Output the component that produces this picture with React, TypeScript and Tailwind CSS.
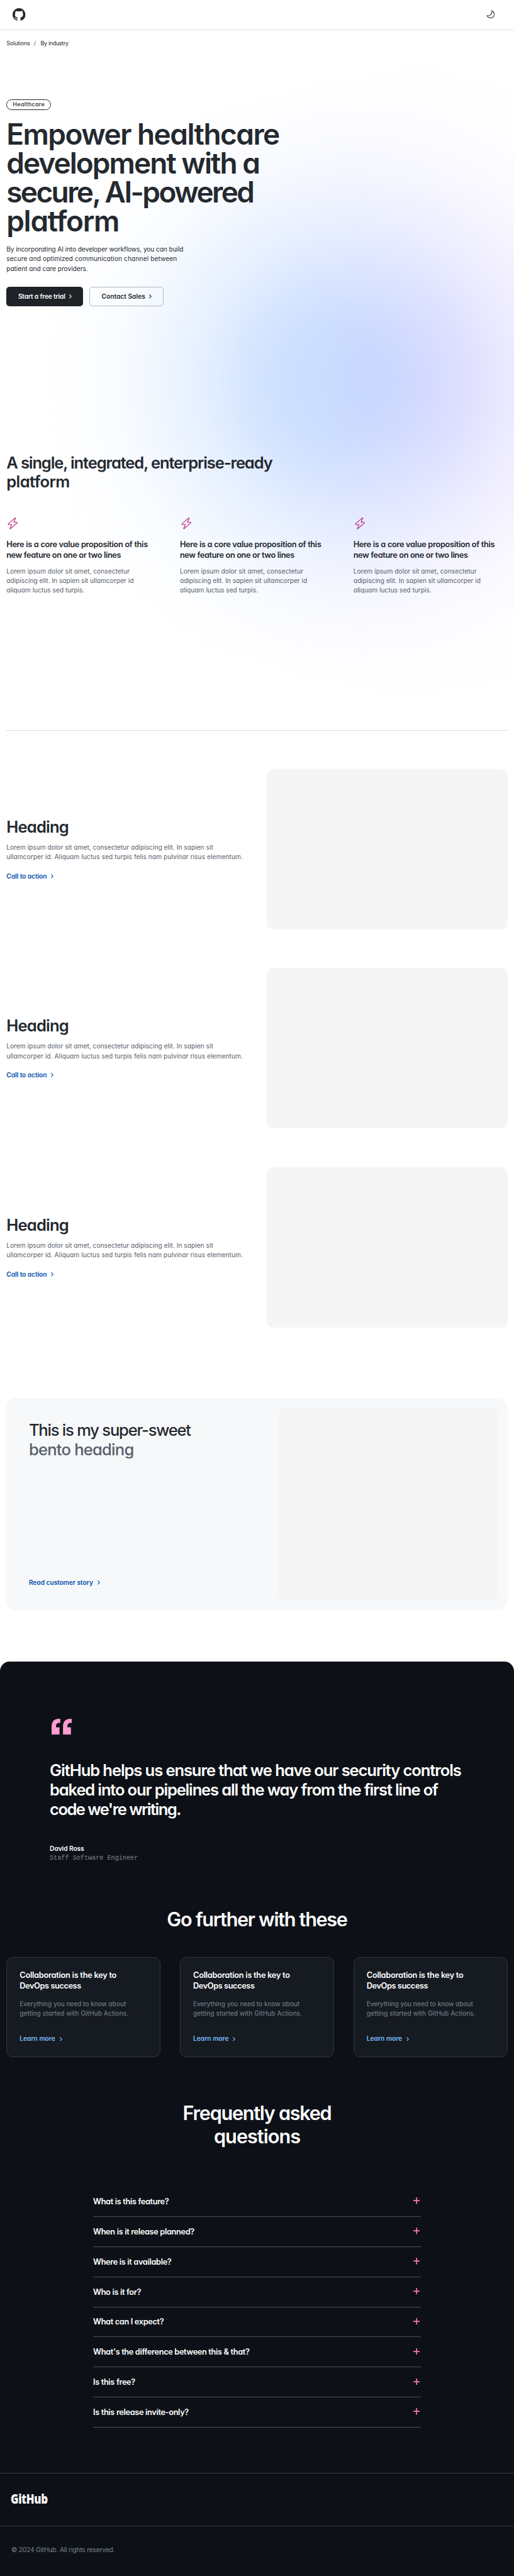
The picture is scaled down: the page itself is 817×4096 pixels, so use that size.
import type { ReactNode } from "react";
import clsx from "clsx";
import { GoMoon, GoZap } from "react-icons/go";

/** One line of text with its own tracking. */
function Line({ className, children }: { className?: string; children: ReactNode }) {
  return <span className={clsx("block whitespace-nowrap", className)}>{children}</span>;
}

function Chevron({ className }: { className?: string }) {
  return (
    <svg
      viewBox="0 0 6 10"
      className={clsx("h-[6.6px] w-[4px] shrink-0", className)}
      fill="none"
      stroke="currentColor"
      strokeWidth="1.7"
      strokeLinecap="round"
      strokeLinejoin="round"
    >
      <path d="M1 1l4 4-4 4" />
    </svg>
  );
}

function GitHubMark() {
  return (
    <svg viewBox="0 0 16 16" className="size-[20.4px]" fill="currentColor" aria-label="GitHub">
      <path d="M8 0c4.42 0 8 3.58 8 8a8.013 8.013 0 0 1-5.45 7.59c-.4.08-.55-.17-.55-.38 0-.27.01-1.13.01-2.2 0-.75-.25-1.23-.54-1.48 1.78-.2 3.65-.88 3.65-3.95 0-.88-.31-1.59-.82-2.15.08-.2.36-1.02-.08-2.12 0 0-.67-.22-2.2.82-.64-.18-1.32-.27-2-.27-.68 0-1.36.09-2 .27-1.53-1.03-2.2-.82-2.2-.82-.44 1.1-.16 1.92-.08 2.12-.51.56-.82 1.28-.82 2.15 0 3.06 1.86 3.75 3.64 3.95-.23.2-.44.55-.51 1.07-.46.21-1.61.55-2.33-.66-.15-.24-.6-.83-1.23-.82-.67.01-.27.38.01.53.34.19.73.9.82 1.13.16.45.68 1.31 2.69.94 0 .67.01 1.3.01 1.49 0 .21-.15.45-.55.38A7.995 7.995 0 0 1 0 8c0-4.42 3.58-8 8-8Z" />
    </svg>
  );
}

function QuoteMark() {
  const mark = "M0 39.3V18C0 7 7 0 18 0h3.7v10.3h-2C14 10.3 11 13.5 11 18v3h8.7v18.3z";
  return (
    <svg viewBox="0 0 50.2 39.3" className="ml-[3.4px] h-[25.1px] w-[32px]" fill="#ff9bce">
      <path d={mark} />
      <path d={mark} transform="translate(28.5 0)" />
    </svg>
  );
}

function TextLink({ children, className }: { children: ReactNode; className?: string }) {
  return (
    <a
      className={clsx(
        "flex items-center text-[10.2px] leading-[15.3px] font-[570] whitespace-nowrap",
        className,
      )}
    >
      {children}
      <Chevron className="ml-[6.8px]" />
    </a>
  );
}

function Header() {
  return (
    <header className="flex h-12 items-center justify-between border-b border-[#e1e4e6] pr-[29.4px] pb-px pl-[20.4px]">
      <GitHubMark />
      <GoMoon className="size-[15.3px]" />
    </header>
  );
}

function Hero() {
  return (
    <section className="flex h-[672.6px] flex-col items-start px-[10.2px]">
      <nav className="flex pt-[12.9px] text-[8.93px] leading-[15px]">
        <span className="w-[43.6px] tracking-[-0.018em]">Solutions</span>
        <span className="w-[10.7px] text-[#57606a]">/</span>
        <span className="tracking-[-0.034em]">By industry</span>
      </nav>
      <div className="mt-[82px] flex h-[17.5px] w-[71px] items-center justify-center rounded-full border border-[#24292f] text-[8.93px] leading-none font-medium tracking-[0.037em]">
        Healthcare
      </div>
      <h1 className="mt-[15.3px] text-[45.95px] leading-[45.93px] font-[580]">
        <Line className="tracking-[-0.033em]">Empower healthcare</Line>
        <Line className="tracking-[-0.042em]">development with a</Line>
        <Line className="tracking-[-0.056em]">secure, AI-powered</Line>
        <Line className="tracking-[-0.027em]">platform</Line>
      </h1>
      <p className="mt-[14.5px] text-[10.2px] leading-[15.31px]">
        <Line className="tracking-[-0.0104em]">By incorporating AI into developer workflows, you can build</Line>
        <Line className="tracking-[0.0077em]">secure and optimized communication channel between</Line>
        <Line className="tracking-[-0.0043em]">patient and care providers.</Line>
      </p>
      <div className="mt-[21.2px] flex gap-[10.2px] text-[10.2px] leading-none font-[570]">
        <a className="flex h-[30.6px] w-[122px] items-center rounded-[5px] bg-[#1f2328] pl-[18.7px] tracking-[-0.015em] text-white">
          Start a free trial
          <Chevron className="ml-[6.2px]" />
        </a>
        <a className="flex h-[30.6px] w-[117.4px] items-center rounded-[5px] border-[1.5px] border-[#afb8c1] pl-[18px] tracking-[0.002em]">
          Contact Sales
          <Chevron className="ml-[6.2px]" />
        </a>
      </div>
    </section>
  );
}

function Pillar() {
  return (
    <div>
      <GoZap className="size-[20.4px] text-[#bf3989]" />
      <h3 className="mt-[15.3px] text-[12.76px] leading-[16.6px] font-[570]">
        <Line className="tracking-[-0.024em]">Here is a core value proposition of this</Line>
        <Line className="tracking-[-0.029em]">new feature on one or two lines</Line>
      </h3>
      <p className="mt-[9.5px] text-[10.2px] leading-[15.31px] text-[#57606a]">
        <Line className="tracking-[0.0035em]">Lorem ipsum dolor sit amet, consectetur</Line>
        <Line className="tracking-[-0.0014em]">adipiscing elit. In sapien sit ullamcorper id</Line>
        <Line>aliquam luctus sed turpis.</Line>
      </p>
    </div>
  );
}

function Pillars() {
  return (
    <section className="mx-[10.2px] h-[441.3px] border-b border-[#dadadd]">
      <h2 className="text-[25.53px] leading-[30.62px] font-[580]">
        <Line className="tracking-[-0.044em]">A single, integrated, enterprise-ready</Line>
        <Line className="tracking-[-0.022em]">platform</Line>
      </h2>
      <div className="mt-[40.5px] grid grid-cols-3 gap-[30.6px]">
        <Pillar />
        <Pillar />
        <Pillar />
      </div>
    </section>
  );
}

function River() {
  return (
    <div className="grid h-[255.2px] grid-cols-[1fr_383px] items-center">
      <div>
        <h3 className="text-[25.53px] leading-[30.62px] font-[570] tracking-[-0.030em]">Heading</h3>
        <p className="mt-[9.3px] text-[10.2px] leading-[15.31px] text-[#57606a]">
          <Line className="tracking-[0.0011em]">
            Lorem ipsum dolor sit amet, consectetur adipiscing elit. In sapien sit
          </Line>
          <Line className="tracking-[0.0056em]">
            ullamcorper id. Aliquam luctus sed turpis felis nam pulvinar risus elementum.
          </Line>
        </p>
        <TextLink className="mt-[15.3px] tracking-[-0.006em] text-[#0550ae]">Call to action</TextLink>
      </div>
      <div className="h-full rounded-[10.2px] bg-[#f5f5f5]" />
    </div>
  );
}

function Bento() {
  return (
    <section className="mx-[10.2px] mt-[112.3px] flex h-[336.9px] justify-between rounded-[15.3px] bg-[#f6f8fa] p-[15.3px]">
      <div className="flex flex-col justify-between pt-[20.9px] pb-[20.4px] pl-[20.4px]">
        <h2 className="text-[25.53px] leading-[30.62px] font-[450]">
          <Line className="tracking-[-0.047em]">This is my super-sweet</Line>
          <Line className="tracking-[-0.029em] text-[#57606a]">bento heading</Line>
        </h2>
        <TextLink className="tracking-[-0.003em] text-[#0550ae]">Read customer story</TextLink>
      </div>
      <div className="w-[349.8px] rounded-[10.2px] bg-[#f5f5f5]" />
    </section>
  );
}

function Testimonial() {
  return (
    <figure className="px-[79.1px] pt-[91.8px]">
      <QuoteMark />
      <blockquote className="mt-[41.9px] text-[25.53px] leading-[30.62px] font-[570]">
        <Line className="tracking-[-0.0425em]">GitHub helps us ensure that we have our security controls</Line>
        <Line className="tracking-[-0.0455em]">baked into our pipelines all the way from the first line of</Line>
        <Line className="tracking-[-0.060em]">code we're writing.</Line>
      </blockquote>
      <figcaption className="mt-[39.5px] text-[10.2px] leading-[15.31px]">
        <Line className="font-[570] tracking-[-0.007em]">David Ross</Line>
        <Line className="font-['Liberation_Mono',monospace] tracking-[-0.002em] text-[#7d8590]">
          Staff Software Engineer
        </Line>
      </figcaption>
    </figure>
  );
}

function Card() {
  return (
    <article className="h-[158.9px] rounded-[10.2px] border border-[#30363d] bg-[#161b22] px-[20.1px] pt-[19.9px]">
      <h3 className="text-[12.76px] leading-[16.6px] font-[570]">
        <Line className="tracking-[-0.020em]">Collaboration is the key to</Line>
        <Line className="tracking-[-0.032em]">DevOps success</Line>
      </h3>
      <p className="mt-[12.8px] text-[10.2px] leading-[15.31px] text-[#7d8590]">
        <Line className="tracking-[-0.0054em]">Everything you need to know about</Line>
        <Line className="tracking-[0.0038em]">getting started with GitHub Actions.</Line>
      </p>
      <TextLink className="mt-[24.5px] tracking-[0.001em] text-[#79c0ff]">Learn more</TextLink>
    </article>
  );
}

const questions = [
  "What is this feature?",
  "When is it release planned?",
  "Where is it available?",
  "Who is it for?",
  "What can I expect?",
  "What's the difference between this & that?",
  "Is this free?",
  "Is this release invite-only?",
];

function Faq() {
  return (
    <section className="mt-[71px] flex flex-col items-center">
      <h2 className="text-center text-[30.63px] leading-[36.74px] font-[570]">
        <Line className="tracking-[-0.042em]">Frequently asked</Line>
        <Line className="tracking-[-0.032em]">questions</Line>
      </h2>
      <ul className="mt-[61.6px] w-[521px]">
        {questions.map((question) => (
          <li
            key={question}
            className="flex h-[47.86px] items-center justify-between border-b border-[#484f58] pr-[2px] text-[12.76px] font-[570] tracking-[-0.027em]"
          >
            {question}
            <svg viewBox="0 0 16 16" className="mb-[2px] size-[10.4px]" stroke="#f778ba" strokeWidth="2.6">
              <path d="M8 0v16M0 8h16" />
            </svg>
          </li>
        ))}
      </ul>
    </section>
  );
}

function Footer() {
  return (
    <footer className="mt-[71.6px] border-t border-[#30363d]">
      <div className="flex h-[84.7px] items-center border-b border-[#30363d] pb-[3px] pl-[17.2px]">
        <span className="origin-left scale-x-[.78] font-['Open_Sans',sans-serif] text-[21.6px] leading-none font-extrabold tracking-[-0.02em]">
          GitHub
        </span>
      </div>
      <p className="pt-[29.5px] pl-[17.9px] text-[10.2px] leading-[15.31px] tracking-[-0.0154em] text-[#7d8590]">
        © 2024 GitHub. All rights reserved.
      </p>
    </footer>
  );
}

export default function App() {
  return (
    <div className="h-[4096px] w-[817px] overflow-hidden bg-white font-['Inter',sans-serif] text-[#24292f] [font-feature-settings:'cv11']">
      <div className="bg-[radial-gradient(460px_485px_at_515px_605px,rgba(130,190,255,.37)_0%,rgba(130,190,255,.35)_18%,rgba(130,190,255,.3)_27%,rgba(130,190,255,.2)_42%,rgba(130,190,255,.11)_58%,rgba(130,190,255,.05)_72%,rgba(130,190,255,.015)_88%,transparent_100%),radial-gradient(480px_520px_at_662px_608px,rgba(185,140,255,.25)_0%,rgba(185,140,255,.21)_18%,rgba(185,140,255,.15)_32%,rgba(185,140,255,.09)_48%,rgba(185,140,255,.045)_64%,rgba(185,140,255,.015)_82%,transparent_100%)]">
        <Header />
        <Hero />
        <Pillars />
      </div>
      <section className="mx-[10.2px] mt-[61px] flex flex-col gap-[61.2px]">
        <River />
        <River />
        <River />
      </section>
      <Bento />
      <div className="mt-[81.6px] h-[1454.4px] rounded-t-[15.3px] bg-[#0d1117] text-white">
        <Testimonial />
        <section className="mt-[71.8px]">
          <h2 className="text-center text-[30.63px] leading-[36.74px] font-[570] tracking-[-0.043em]">
            Go further with these
          </h2>
          <div className="mx-[10.2px] mt-[41.3px] grid grid-cols-3 gap-[30.6px]">
            <Card />
            <Card />
            <Card />
          </div>
        </section>
        <Faq />
        <Footer />
      </div>
    </div>
  );
}
